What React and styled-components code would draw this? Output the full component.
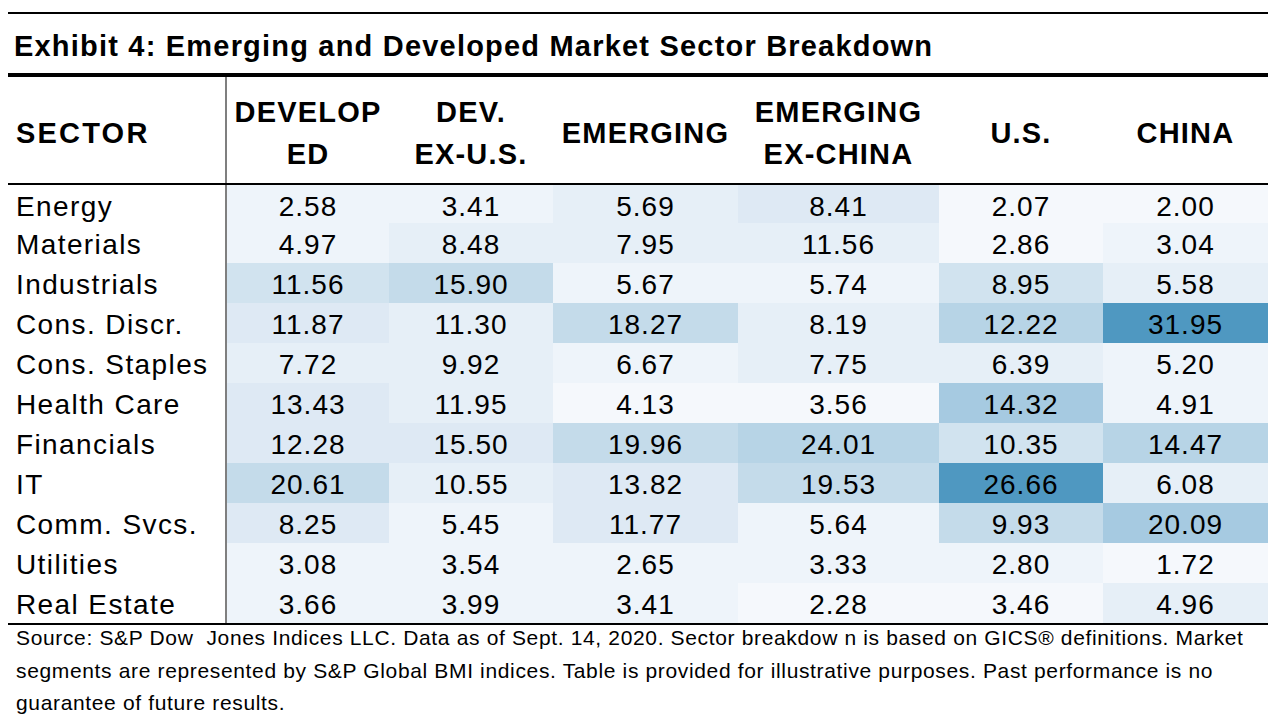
import React from 'react';
import styled, { createGlobalStyle } from 'styled-components';

const GlobalStyle = createGlobalStyle`
  html, body {
    margin: 0;
    padding: 0;
    background: #ffffff;
  }
  body {
    font-family: "Liberation Sans", Arial, sans-serif;
    color: #000;
  }
`;

// shades used for the heat map, light to dark
const shades = [
  '#f5f8fc',
  '#eef4fa',
  '#e6eff7',
  '#dee9f4',
  '#d1e3ef',
  '#c4dbea',
  '#b7d4e6',
  '#a6cae1',
  '#90bed9',
  '#4f98c1',
];

const columns = ['DEVELOP\nED', 'DEV.\nEX-U.S.', 'EMERGING', 'EMERGING\nEX-CHINA', 'U.S.', 'CHINA'];

const rows = [
  ['Energy', ['2.58', 1], ['3.41', 1], ['5.69', 2], ['8.41', 3], ['2.07', 0], ['2.00', 0]],
  ['Materials', ['4.97', 1], ['8.48', 2], ['7.95', 2], ['11.56', 2], ['2.86', 0], ['3.04', 1]],
  ['Industrials', ['11.56', 4], ['15.90', 5], ['5.67', 1], ['5.74', 1], ['8.95', 4], ['5.58', 2]],
  ['Cons. Discr.', ['11.87', 3], ['11.30', 2], ['18.27', 5], ['8.19', 2], ['12.22', 6], ['31.95', 9]],
  ['Cons. Staples', ['7.72', 2], ['9.92', 2], ['6.67', 1], ['7.75', 2], ['6.39', 2], ['5.20', 1]],
  ['Health Care', ['13.43', 3], ['11.95', 2], ['4.13', 0], ['3.56', 0], ['14.32', 7], ['4.91', 1]],
  ['Financials', ['12.28', 3], ['15.50', 3], ['19.96', 5], ['24.01', 6], ['10.35', 4], ['14.47', 6]],
  ['IT', ['20.61', 5], ['10.55', 2], ['13.82', 3], ['19.53', 5], ['26.66', 9], ['6.08', 2]],
  ['Comm. Svcs.', ['8.25', 3], ['5.45', 1], ['11.77', 3], ['5.64', 1], ['9.93', 5], ['20.09', 7]],
  ['Utilities', ['3.08', 1], ['3.54', 1], ['2.65', 1], ['3.33', 1], ['2.80', 1], ['1.72', 0]],
  ['Real Estate', ['3.66', 1], ['3.99', 1], ['3.41', 1], ['2.28', 0], ['3.46', 0], ['4.96', 2]],
];

const App = () => {
  return (
    <>
      <GlobalStyle />
      <Page>
        <Exhibit>
          <Title>Exhibit 4: Emerging and Developed Market Sector Breakdown</Title>
          <HeaderRow>
            <SectorHead>SECTOR</SectorHead>
            {columns.map((label) => (
              <ColumnHead key={label}>
                {label.split('\n').map((line) => (
                  <span key={line}>{line}</span>
                ))}
              </ColumnHead>
            ))}
          </HeaderRow>
          <Body>
            {rows.map(([sector, ...cells], i) => (
              <Row key={sector} $first={i === 0}>
                <SectorCell>{sector}</SectorCell>
                {cells.map(([value, level], j) => (
                  <ValueCell key={j} $level={level}>{value}</ValueCell>
                ))}
              </Row>
            ))}
          </Body>
          <Footer>
            Source: S&amp;P Dow{'\u00a0'} Jones Indices LLC. Data as of Sept. 14, 2020. Sector breakdow n is based on GICS® definitions. Market
            <br />
            segments are represented by S&amp;P Global BMI indices. Table is provided for illustrative purposes. Past performance is no
            <br />
            guarantee of future results.
          </Footer>
        </Exhibit>
      </Page>
    </>
  );
};

const Page = styled.div`
  padding: 12px 8px 0 8px;
`;

const Exhibit = styled.div`
  width: 1260px;
  border-top: 2px solid #000;
`;

const Title = styled.div`
  height: 63px;
  box-sizing: border-box;
  padding: 6px 0 0 6px;
  line-height: 53px;
  font-size: 29px;
  font-weight: 700;
  letter-spacing: 1.2px;
  white-space: nowrap;
  border-bottom: 4px solid #000;
`;

const grid = `
  display: grid;
  grid-template-columns: 219px 162px 164px 185px 201px 164px 165px;
`;

const HeaderRow = styled.div`
  ${grid}
  height: 106px;
  border-bottom: 2px solid #000;
`;

const SectorHead = styled.div`
  display: flex;
  align-items: center;
  padding: 6px 0 0 8px;
  border-right: 2px solid #7f7f7f;
  font-size: 29px;
  font-weight: 700;
  letter-spacing: 2.2px;
  line-height: 42px;
`;

const ColumnHead = styled.div`
  display: flex;
  flex-direction: column;
  justify-content: center;
  align-items: center;
  padding-top: 6px;
  font-size: 29px;
  font-weight: 700;
  letter-spacing: 1.2px;
  line-height: 42px;
  white-space: nowrap;
`;

const Body = styled.div`
  border-bottom: 2px solid #000;
`;

const Row = styled.div`
  ${grid}
  height: ${(p) => (p.$first ? '38px' : '40px')};
  overflow: hidden;
`;

const SectorCell = styled.div`
  padding: 4px 0 0 8px;
  border-right: 2px solid #7f7f7f;
  font-size: 28px;
  line-height: 36px;
  letter-spacing: 1.4px;
  white-space: nowrap;
`;

const ValueCell = styled.div`
  padding-top: 4px;
  background: ${(p) => shades[p.$level]};
  text-align: center;
  font-size: 28px;
  line-height: 36px;
  letter-spacing: 1px;
`;

const Footer = styled.div`
  margin-top: -3px;
  padding-left: 8px;
  font-size: 21px;
  line-height: 32.5px;
  letter-spacing: 0.65px;
  white-space: nowrap;
`;

export default App;
